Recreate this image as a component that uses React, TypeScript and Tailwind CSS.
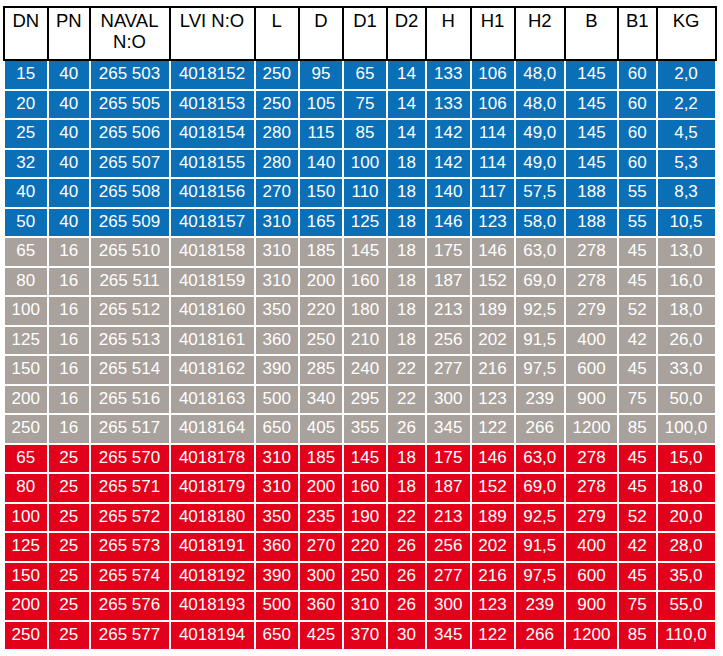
const HEADERS = ['DN', 'PN', 'NAVAL N:O', 'LVI N:O', 'L', 'D', 'D1', 'D2', 'H', 'H1', 'H2', 'B', 'B1', 'KG']

type Row = { tone: 'blue' | 'gray' | 'red'; cells: string[] }

const ROWS: Row[] = [
  { tone: 'blue', cells: ['15', '40', '265 503', '4018152', '250', '95', '65', '14', '133', '106', '48,0', '145', '60', '2,0'] },
  { tone: 'blue', cells: ['20', '40', '265 505', '4018153', '250', '105', '75', '14', '133', '106', '48,0', '145', '60', '2,2'] },
  { tone: 'blue', cells: ['25', '40', '265 506', '4018154', '280', '115', '85', '14', '142', '114', '49,0', '145', '60', '4,5'] },
  { tone: 'blue', cells: ['32', '40', '265 507', '4018155', '280', '140', '100', '18', '142', '114', '49,0', '145', '60', '5,3'] },
  { tone: 'blue', cells: ['40', '40', '265 508', '4018156', '270', '150', '110', '18', '140', '117', '57,5', '188', '55', '8,3'] },
  { tone: 'blue', cells: ['50', '40', '265 509', '4018157', '310', '165', '125', '18', '146', '123', '58,0', '188', '55', '10,5'] },
  { tone: 'gray', cells: ['65', '16', '265 510', '4018158', '310', '185', '145', '18', '175', '146', '63,0', '278', '45', '13,0'] },
  { tone: 'gray', cells: ['80', '16', '265 511', '4018159', '310', '200', '160', '18', '187', '152', '69,0', '278', '45', '16,0'] },
  { tone: 'gray', cells: ['100', '16', '265 512', '4018160', '350', '220', '180', '18', '213', '189', '92,5', '279', '52', '18,0'] },
  { tone: 'gray', cells: ['125', '16', '265 513', '4018161', '360', '250', '210', '18', '256', '202', '91,5', '400', '42', '26,0'] },
  { tone: 'gray', cells: ['150', '16', '265 514', '4018162', '390', '285', '240', '22', '277', '216', '97,5', '600', '45', '33,0'] },
  { tone: 'gray', cells: ['200', '16', '265 516', '4018163', '500', '340', '295', '22', '300', '123', '239', '900', '75', '50,0'] },
  { tone: 'gray', cells: ['250', '16', '265 517', '4018164', '650', '405', '355', '26', '345', '122', '266', '1200', '85', '100,0'] },
  { tone: 'red', cells: ['65', '25', '265 570', '4018178', '310', '185', '145', '18', '175', '146', '63,0', '278', '45', '15,0'] },
  { tone: 'red', cells: ['80', '25', '265 571', '4018179', '310', '200', '160', '18', '187', '152', '69,0', '278', '45', '18,0'] },
  { tone: 'red', cells: ['100', '25', '265 572', '4018180', '350', '235', '190', '22', '213', '189', '92,5', '279', '52', '20,0'] },
  { tone: 'red', cells: ['125', '25', '265 573', '4018191', '360', '270', '220', '26', '256', '202', '91,5', '400', '42', '28,0'] },
  { tone: 'red', cells: ['150', '25', '265 574', '4018192', '390', '300', '250', '26', '277', '216', '97,5', '600', '45', '35,0'] },
  { tone: 'red', cells: ['200', '25', '265 576', '4018193', '500', '360', '310', '26', '300', '123', '239', '900', '75', '55,0'] },
  { tone: 'red', cells: ['250', '25', '265 577', '4018194', '650', '425', '370', '30', '345', '122', '266', '1200', '85', '110,0'] },
]

const TONE = {
  blue: 'bg-[#0a6fb7]',
  gray: 'bg-[#a9a19b]',
  red: 'bg-[#e2001a]',
}

// shared column tracks so header and body line up
const COLS =
  'grid-cols-[42.5px_39.5px_78px_83px_42.5px_42px_42px_37px_42.5px_42px_48.5px_51px_36.5px_57px]'

export default function App() {
  return (
    <div className="min-h-screen bg-white font-['Liberation_Sans',Arial,sans-serif] text-[17px]">
      <div className="ml-[2.5px] w-[714px] pt-[6px]">
        {/* Header */}
        <div className={`grid ${COLS} gap-[2px] bg-black p-[2px]`}>
          {HEADERS.map((h) => (
            <div
              key={h}
              className="h-[51px] bg-white px-0.5 pt-[1.5px] text-center text-[18.5px] leading-[21.5px] text-black"
            >
              {h}
            </div>
          ))}
        </div>

        {/* Body */}
        <div className={`grid ${COLS} gap-[2px] bg-white px-[2px]`}>
          {ROWS.map((row, i) =>
            row.cells.map((c, j) => (
              <div
                key={`${i}-${j}`}
                className={`flex h-[27.5px] items-center justify-center pb-[2px] leading-none text-white ${TONE[row.tone]}`}
              >
                {c}
              </div>
            )),
          )}
        </div>
      </div>
    </div>
  )
}
